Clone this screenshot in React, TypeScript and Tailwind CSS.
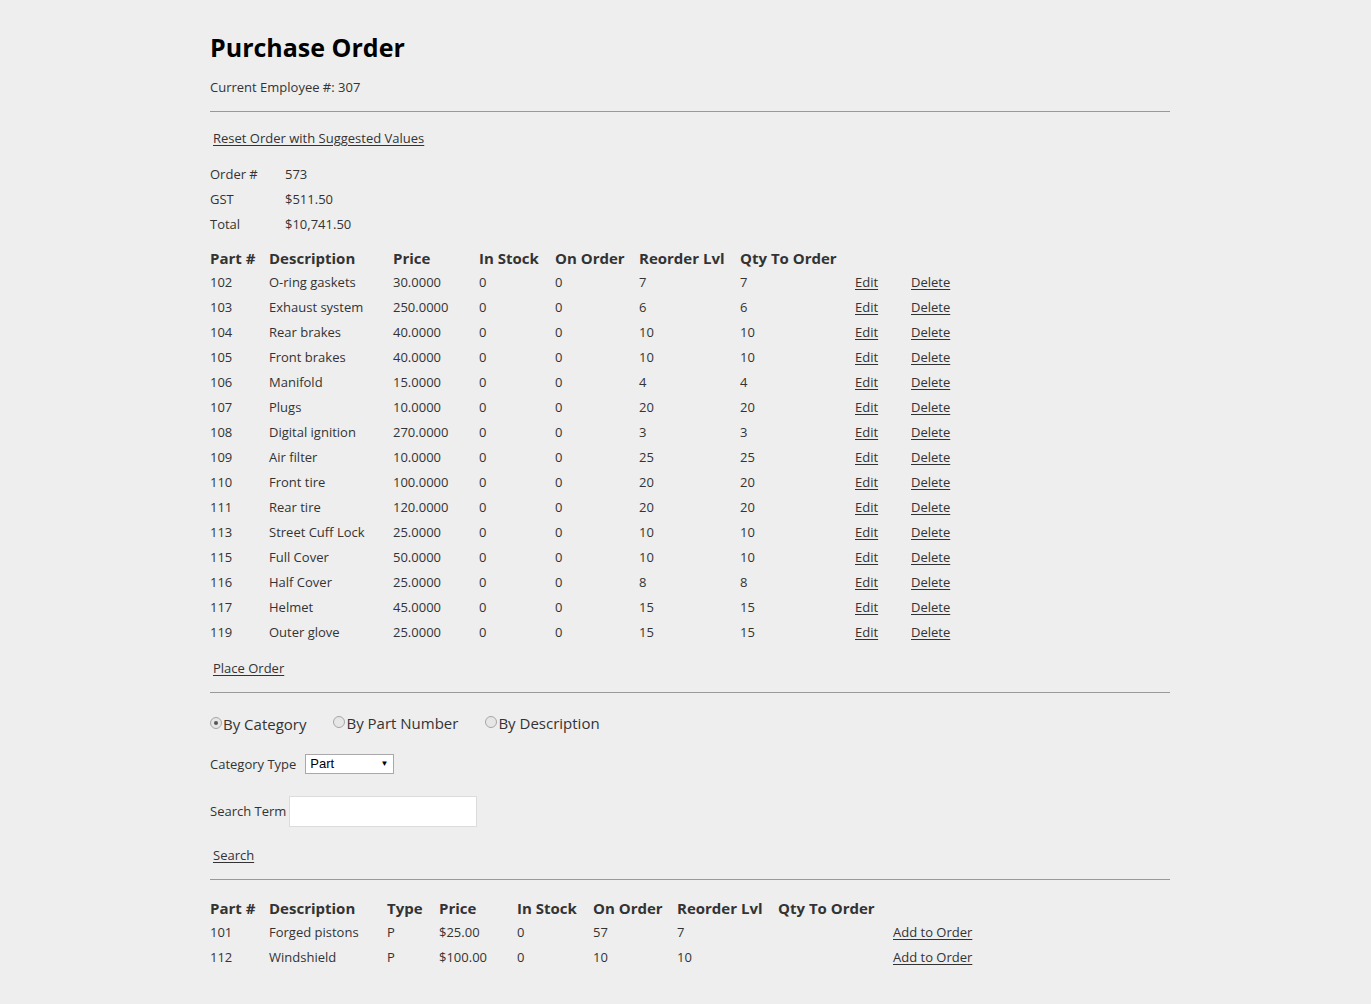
import React from "react";

type OrderLine = {
  part: string;
  desc: string;
  price: string;
  stock: number;
  onOrder: number;
  reorder: number;
  qty: number;
};

const ORDER_LINES: OrderLine[] = [
  { part: "102", desc: "O-ring gaskets", price: "30.0000", stock: 0, onOrder: 0, reorder: 7, qty: 7 },
  { part: "103", desc: "Exhaust system", price: "250.0000", stock: 0, onOrder: 0, reorder: 6, qty: 6 },
  { part: "104", desc: "Rear brakes", price: "40.0000", stock: 0, onOrder: 0, reorder: 10, qty: 10 },
  { part: "105", desc: "Front brakes", price: "40.0000", stock: 0, onOrder: 0, reorder: 10, qty: 10 },
  { part: "106", desc: "Manifold", price: "15.0000", stock: 0, onOrder: 0, reorder: 4, qty: 4 },
  { part: "107", desc: "Plugs", price: "10.0000", stock: 0, onOrder: 0, reorder: 20, qty: 20 },
  { part: "108", desc: "Digital ignition", price: "270.0000", stock: 0, onOrder: 0, reorder: 3, qty: 3 },
  { part: "109", desc: "Air filter", price: "10.0000", stock: 0, onOrder: 0, reorder: 25, qty: 25 },
  { part: "110", desc: "Front tire", price: "100.0000", stock: 0, onOrder: 0, reorder: 20, qty: 20 },
  { part: "111", desc: "Rear tire", price: "120.0000", stock: 0, onOrder: 0, reorder: 20, qty: 20 },
  { part: "113", desc: "Street Cuff Lock", price: "25.0000", stock: 0, onOrder: 0, reorder: 10, qty: 10 },
  { part: "115", desc: "Full Cover", price: "50.0000", stock: 0, onOrder: 0, reorder: 10, qty: 10 },
  { part: "116", desc: "Half Cover", price: "25.0000", stock: 0, onOrder: 0, reorder: 8, qty: 8 },
  { part: "117", desc: "Helmet", price: "45.0000", stock: 0, onOrder: 0, reorder: 15, qty: 15 },
  { part: "119", desc: "Outer glove", price: "25.0000", stock: 0, onOrder: 0, reorder: 15, qty: 15 },
];

const RESULTS = [
  { part: "101", desc: "Forged pistons", type: "P", price: "$25.00", stock: 0, onOrder: 57, reorder: 7 },
  { part: "112", desc: "Windshield", type: "P", price: "$100.00", stock: 0, onOrder: 10, reorder: 10 },
];

const ORDER_COLS = "grid grid-cols-[59px_124px_86px_76px_84px_101px_115px_56px_80px]";
const RESULT_COLS = "grid grid-cols-[59px_118px_52px_78px_76px_84px_101px_115px_100px]";

function Radio({ checked, label }: { checked?: boolean; label: string }) {
  return (
    <span className="inline-flex items-center">
      <span className="relative w-[12px] h-[12px] rounded-full border border-[#a6a6a6] bg-[#e6e6e6] mr-[1px] top-[-1px]">
        {checked && (
          <span className="absolute left-[3px] top-[3px] w-[4px] h-[4px] rounded-full bg-[#555]" />
        )}
      </span>
      <span className="text-[15px]">{label}</span>
    </span>
  );
}

function Link({ children }: { children: React.ReactNode }) {
  return <a className="underline underline-offset-2 text-[#333] cursor-pointer">{children}</a>;
}

export default function App() {
  return (
    <div
      className="min-h-[1004px] bg-[#eeeeee] text-[#333] text-[13px]"
      style={{ fontFamily: '"Open Sans", "Noto Sans", Arial, sans-serif' }}
    >
      <div className="w-[960px] ml-[210px] pt-[31px]">
        <h1 className="text-[25px] leading-[32px] font-bold text-black">Purchase Order</h1>

        <p className="mt-[15px] leading-[18px]">Current Employee #: 307</p>

        <hr className="mt-[15px] border-t border-[#999]" />

        <div className="mt-[16px] pl-[3px] leading-[20px]">
          <Link>Reset Order with Suggested Values</Link>
        </div>

        <div className="mt-[14px] leading-[25px]">
          <div className="grid grid-cols-[75px_1fr]">
            <span>Order #</span>
            <span>573</span>
            <span>GST</span>
            <span>$511.50</span>
            <span>Total</span>
            <span>$10,741.50</span>
          </div>
        </div>

        <div className="mt-[9px]">
          <div className={`${ORDER_COLS} leading-[24px] text-[15px] font-bold`}>
            <span>Part #</span>
            <span>Description</span>
            <span>Price</span>
            <span>In Stock</span>
            <span>On Order</span>
            <span>Reorder Lvl</span>
            <span>Qty To Order</span>
            <span />
            <span />
          </div>
          {ORDER_LINES.map((r) => (
            <div key={r.part} className={`${ORDER_COLS} leading-[25px]`}>
              <span>{r.part}</span>
              <span>{r.desc}</span>
              <span>{r.price}</span>
              <span>{r.stock}</span>
              <span>{r.onOrder}</span>
              <span>{r.reorder}</span>
              <span>{r.qty}</span>
              <span>
                <Link>Edit</Link>
              </span>
              <span>
                <Link>Delete</Link>
              </span>
            </div>
          ))}
        </div>

        <div className="mt-[13px] pl-[3px] leading-[20px]">
          <Link>Place Order</Link>
        </div>

        <hr className="mt-[14px] border-t border-[#999]" />

        <div className="mt-[20px] flex items-center leading-[20px]">
          <Radio checked label="By Category" />
          <span className="ml-[27px]">
            <Radio label="By Part Number" />
          </span>
          <span className="ml-[27px]">
            <Radio label="By Description" />
          </span>
        </div>

        <div className="mt-[20px] flex items-center leading-[20px]">
          <span>Category Type</span>
          <div
            className="ml-[9px] w-[89px] h-[20px] bg-white border border-[#a9a9a9] flex items-center justify-between pl-[4px] pr-[5px] text-[13px] text-black"
            style={{ fontFamily: '"Liberation Sans", Arial, sans-serif' }}
          >
            <span>Part</span>
            <span className="text-[8px]">▼</span>
          </div>
        </div>

        <div className="mt-[22px] flex items-center">
          <span>Search Term</span>
          <div className="ml-[3px] w-[188px] h-[31px] bg-white border border-[#dcdcdc]" />
        </div>

        <div className="mt-[18px] pl-[3px] leading-[20px]">
          <Link>Search</Link>
        </div>

        <hr className="mt-[14px] border-t border-[#999]" />

        <div className="mt-[16px]">
          <div className={`${RESULT_COLS} leading-[24px] text-[15px] font-bold`}>
            <span>Part #</span>
            <span>Description</span>
            <span>Type</span>
            <span>Price</span>
            <span>In Stock</span>
            <span>On Order</span>
            <span>Reorder Lvl</span>
            <span>Qty To Order</span>
            <span />
          </div>
          {RESULTS.map((r) => (
            <div key={r.part} className={`${RESULT_COLS} leading-[25px]`}>
              <span>{r.part}</span>
              <span>{r.desc}</span>
              <span>{r.type}</span>
              <span>{r.price}</span>
              <span>{r.stock}</span>
              <span>{r.onOrder}</span>
              <span>{r.reorder}</span>
              <span />
              <span>
                <Link>Add to Order</Link>
              </span>
            </div>
          ))}
        </div>
      </div>
    </div>
  );
}
